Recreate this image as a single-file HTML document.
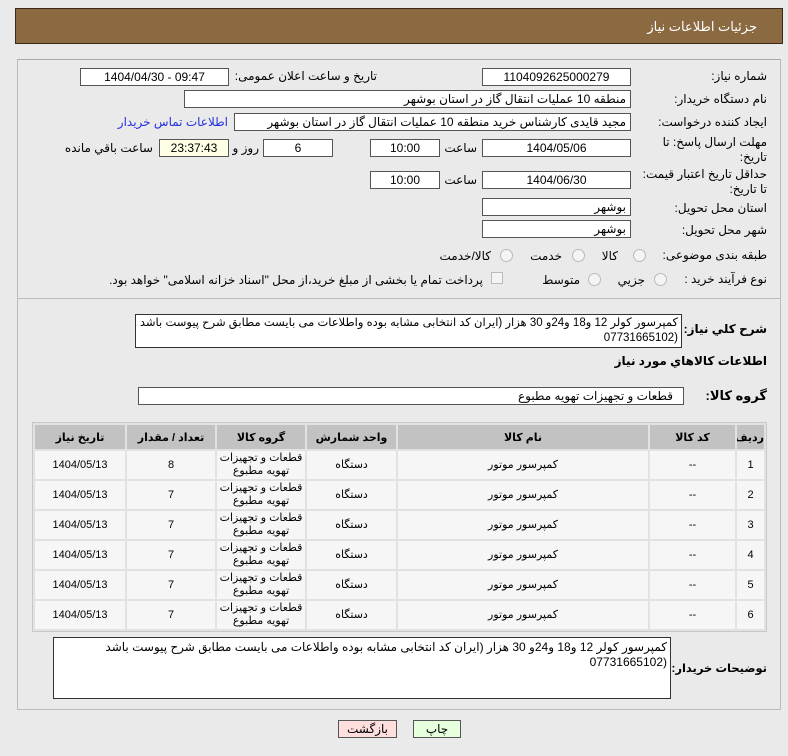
<!DOCTYPE html>
<html><head><meta charset="utf-8"><style>
*{box-sizing:border-box;margin:0;padding:0}
body{width:788px;height:756px;background:#eaeaea;font-family:"Liberation Sans","DejaVu Sans",sans-serif;font-size:12px;color:#000;position:relative;overflow:hidden}
.a{position:absolute;white-space:nowrap}
.r{direction:rtl}
.box{position:absolute;background:#fff;border:1px solid #555;height:18px;line-height:16px;text-align:center;font-size:12px}
.bx{position:absolute;background:#fff;border:1px solid #555;height:18px;line-height:16px;direction:rtl;text-align:right;padding-right:4px;font-size:12px;overflow:hidden;white-space:nowrap}
.lbl{position:absolute;right:21px;direction:rtl;font-size:12px;white-space:nowrap}
.rad{position:absolute;width:13px;height:13px;border-radius:50%;border:1px solid #bbb;background:#f4f4f4}
table{position:absolute;left:32px;top:422px;width:735px;table-layout:fixed;border-collapse:separate;border-spacing:2px;background:#e2e2e2;border:1px solid #c8c8c8;direction:rtl;font-size:11px}
th{background:#c2c2c2;height:24px;font-weight:bold;overflow:hidden;white-space:nowrap}
td{background:#f6f6f6;height:28px;text-align:center;line-height:13px;overflow:hidden;white-space:nowrap;padding:0}
</style></head><body>
<div class="a" style="left:15px;top:8px;width:768px;height:36px;background:#8b6a42;border:1px solid #3a2a1a"></div>
<div class="a r" style="right:31px;top:19px;color:#fff;font-size:13px">جزئیات اطلاعات نیاز</div>
<div class="a" style="left:17px;top:59px;width:764px;height:651px;border:1px solid #bbb;border-top-color:#aaa"></div>
<div class="a" style="left:17px;top:298px;width:764px;height:1px;background:#bbb"></div>

<div class="lbl" style="top:69px">شماره نیاز:</div>
<div class="box" style="left:482px;top:68px;width:149px">1104092625000279</div>
<div class="a r" style="right:411px;top:69px;font-size:12px">تاریخ و ساعت اعلان عمومی:</div>
<div class="box" style="left:80px;top:68px;width:149px">1404/04/30 - 09:47</div>

<div class="lbl" style="top:92px">نام دستگاه خریدار:</div>
<div class="bx" style="left:184px;top:90px;width:447px">منطقه 10 عملیات انتقال گاز در استان بوشهر</div>

<div class="lbl" style="top:115px">ایجاد کننده درخواست:</div>
<div class="bx" style="left:234px;top:113px;width:397px">مجید قایدی کارشناس خرید منطقه 10 عملیات انتقال گاز در استان بوشهر</div>
<div class="a r" style="right:560px;top:115px;color:#2233dd;font-size:12px">اطلاعات تماس خریدار</div>

<div class="lbl" style="top:135px;line-height:15px">مهلت ارسال پاسخ: تا<br>تاریخ:</div>
<div class="box" style="left:482px;top:139px;width:149px">1404/05/06</div>
<div class="a r" style="right:311px;top:141px">ساعت</div>
<div class="box" style="left:370px;top:139px;width:70px">10:00</div>
<div class="box" style="left:263px;top:139px;width:70px">6</div>
<div class="a r" style="right:529px;top:141px">روز و</div>
<div class="box" style="left:159px;top:139px;width:70px;background:#ffffe6">23:37:43</div>
<div class="a r" style="right:635px;top:141px">ساعت باقي مانده</div>

<div class="lbl" style="top:167px;line-height:15px">حداقل تاریخ اعتبار قیمت:<br>تا تاریخ:</div>
<div class="box" style="left:482px;top:171px;width:149px">1404/06/30</div>
<div class="a r" style="right:311px;top:173px">ساعت</div>
<div class="box" style="left:370px;top:171px;width:70px">10:00</div>

<div class="lbl" style="top:201px">استان محل تحویل:</div>
<div class="bx" style="left:482px;top:198px;width:149px">بوشهر</div>
<div class="lbl" style="top:223px">شهر محل تحویل:</div>
<div class="bx" style="left:482px;top:220px;width:149px">بوشهر</div>

<div class="lbl" style="top:248px">طبقه بندی موضوعی:</div>
<div class="rad" style="left:633px;top:249px"></div>
<div class="a r" style="right:170px;top:249px">کالا</div>
<div class="rad" style="left:572px;top:249px"></div>
<div class="a r" style="right:226px;top:249px">خدمت</div>
<div class="rad" style="left:500px;top:249px"></div>
<div class="a r" style="right:297px;top:249px">کالا/خدمت</div>

<div class="lbl" style="top:272px">نوع فرآیند خرید :</div>
<div class="rad" style="left:654px;top:273px"></div>
<div class="a r" style="right:143px;top:273px">جزيي</div>
<div class="rad" style="left:588px;top:273px"></div>
<div class="a r" style="right:208px;top:273px">متوسط</div>
<div class="a" style="left:491px;top:272px;width:12px;height:12px;border:1px solid #bbb;background:#f4f4f4"></div>
<div class="a r" style="right:305px;top:273px;font-size:12px">پرداخت تمام یا بخشی از مبلغ خرید،از محل "اسناد خزانه اسلامی" خواهد بود.</div>

<div class="lbl" style="top:322px;font-weight:bold">شرح كلي نیاز:</div>
<div class="a r" style="left:135px;top:314px;width:547px;height:34px;background:#fff;border:1px solid #333;white-space:normal;text-align:right;padding:1px 3px;font-size:11.5px;line-height:15px;overflow:hidden">کمپرسور کولر 12 و18 و24و 30 هزار (ایران کد انتخابی مشابه بوده واطلاعات می بایست مطابق شرح پیوست باشد (07731665102</div>
<div class="lbl" style="top:354px;font-weight:bold">اطلاعات كالاهاي مورد نياز</div>
<div class="lbl" style="top:388px;font-weight:bold;font-size:13px">گروه کالا:</div>
<div class="bx" style="left:138px;top:387px;width:546px;padding-right:10px">قطعات و تجهیزات تهویه مطبوع</div>

<table>
<colgroup><col style="width:27px"><col style="width:85px"><col style="width:250px"><col style="width:89px"><col style="width:88px"><col style="width:88px"><col style="width:90px"></colgroup>
<tr><th>ردیف</th><th>کد کالا</th><th>نام کالا</th><th>واحد شمارش</th><th>گروه کالا</th><th>تعداد / مقدار</th><th>تاریخ نیاز</th></tr>
<tr><td>1</td><td>--</td><td>کمپرسور موتور</td><td>دستگاه</td><td>قطعات و تجهیزات<br>تهویه مطبوع</td><td>8</td><td>1404/05/13</td></tr>
<tr><td>2</td><td>--</td><td>کمپرسور موتور</td><td>دستگاه</td><td>قطعات و تجهیزات<br>تهویه مطبوع</td><td>7</td><td>1404/05/13</td></tr>
<tr><td>3</td><td>--</td><td>کمپرسور موتور</td><td>دستگاه</td><td>قطعات و تجهیزات<br>تهویه مطبوع</td><td>7</td><td>1404/05/13</td></tr>
<tr><td>4</td><td>--</td><td>کمپرسور موتور</td><td>دستگاه</td><td>قطعات و تجهیزات<br>تهویه مطبوع</td><td>7</td><td>1404/05/13</td></tr>
<tr><td>5</td><td>--</td><td>کمپرسور موتور</td><td>دستگاه</td><td>قطعات و تجهیزات<br>تهویه مطبوع</td><td>7</td><td>1404/05/13</td></tr>
<tr><td>6</td><td>--</td><td>کمپرسور موتور</td><td>دستگاه</td><td>قطعات و تجهیزات<br>تهویه مطبوع</td><td>7</td><td>1404/05/13</td></tr>
</table>

<div class="lbl" style="top:661px;font-weight:bold;font-size:11.5px">توضیحات خریدار:</div>
<div class="a r" style="left:53px;top:637px;width:618px;height:62px;background:#fff;border:1px solid #333;white-space:normal;text-align:right;padding:2px 3px;font-size:12px;line-height:15px">کمپرسور کولر 12 و18 و24و 30 هزار (ایران کد انتخابی مشابه بوده واطلاعات می بایست مطابق شرح پیوست باشد (07731665102</div>

<div class="a" style="left:338px;top:720px;width:59px;height:18px;background:#ffdede;border:1px solid #555;text-align:center;line-height:16px;font-size:12px">بازگشت</div>
<div class="a" style="left:413px;top:720px;width:48px;height:18px;background:#e6ffdc;border:1px solid #555;text-align:center;line-height:16px;font-size:12px">چاپ</div>
</body></html>
